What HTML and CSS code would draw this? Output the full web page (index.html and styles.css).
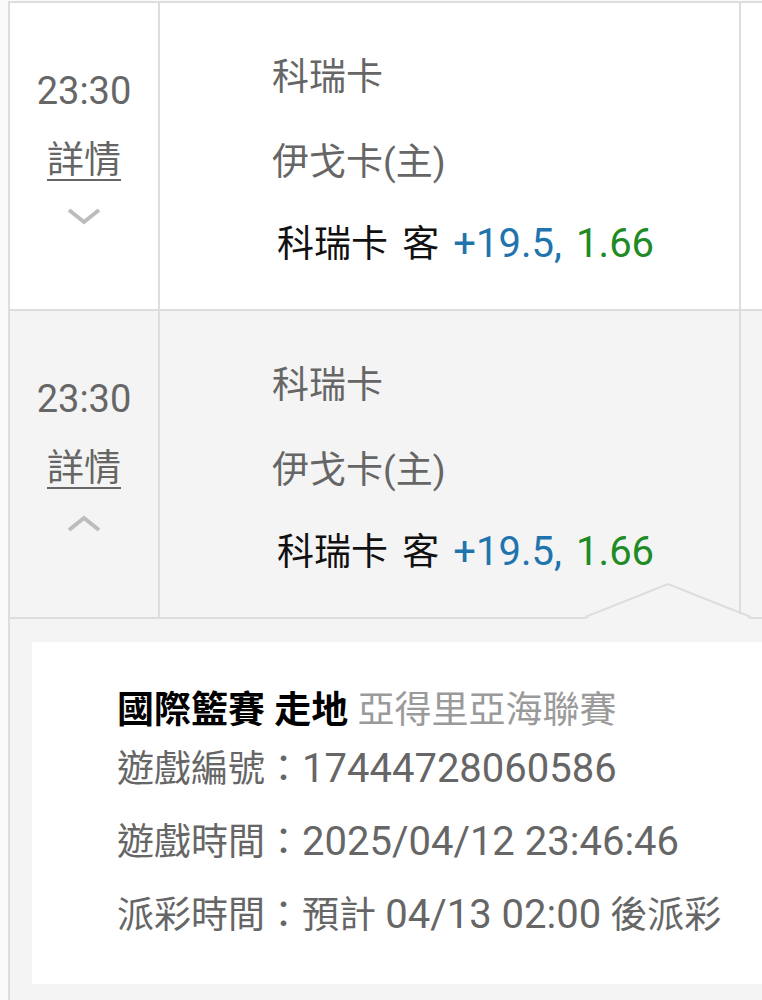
FILE: index.html
```html
<!DOCTYPE html>
<html lang="zh-Hant">
<head>
<meta charset="UTF-8" />
<meta name="viewport" content="width=device-width, initial-scale=1" />
<title>注單明細</title>
<link rel="stylesheet" href="styles.css">
</head>
<body>
  <div class="liste">

    <div class="ligne">
      <div class="cellule col-heure">
        <div class="heure">23:30</div>
        <a class="details" href="#">詳情</a>
        <svg class="chevron" width="36" height="18" viewBox="0 0 36 18"><polyline points="3,3 18,15 33,3" fill="none" stroke="#bdbdbd" stroke-width="4"/></svg>
      </div>
      <div class="cellule col-equipes">
        <div class="equipe">科瑞卡</div>
        <div class="equipe equipe-2">伊戈卡(主)</div>
        <div class="pari">科瑞卡 客 <span class="num handicap">+19.5,</span> <span class="num cote">1.66</span></div>
      </div>
      <div class="cellule col-fin"></div>
    </div>

    <div class="ligne ligne-ouverte">
      <div class="cellule col-heure">
        <div class="heure">23:30</div>
        <a class="details" href="#">詳情</a>
        <svg class="chevron" width="36" height="18" viewBox="0 0 36 18"><polyline points="3,15 18,3 33,15" fill="none" stroke="#bdbdbd" stroke-width="4"/></svg>
      </div>
      <div class="cellule col-equipes">
        <div class="equipe">科瑞卡</div>
        <div class="equipe equipe-2">伊戈卡(主)</div>
        <div class="pari">科瑞卡 客 <span class="num handicap">+19.5,</span> <span class="num cote">1.66</span></div>
      </div>
      <div class="cellule col-fin"></div>
    </div>

    <div class="panneau">
      <svg class="fleche" width="168" height="38" viewBox="0 0 168 38">
        <polygon points="0,37 83,1 166,37" fill="#f4f4f4"/>
        <polyline points="0,35 83,2 166,35" fill="none" stroke="#dddddd" stroke-width="2"/>
      </svg>
      <div class="carte">
        <div class="titre"><b>國際籃賽 走地</b> <span class="ligue">亞得里亞海聯賽</span></div>
        <div class="info">遊戲編號：<span class="num">17444728060586</span></div>
        <div class="info">遊戲時間：<span class="num">2025/04/12 23:46:46</span></div>
        <div class="info">派彩時間：預計 <span class="num">04/13 02:00</span> 後派彩</div>
      </div>
    </div>

  </div>
</body>
</html>
```

FILE: styles.css
```css
:root {
  --bordure: #dddddd;
  --gris-fond: #f4f4f4;
  --texte: #666666;
  --police: Roboto, "Noto Sans CJK TC", sans-serif;
}
body {
  margin: 0;
  background: #fafafa;
  font-family: var(--police);
  font-size: 37px;
  color: var(--texte);
  overflow: hidden;
}
.liste {
  margin: 1px 0 0 8px;
  border-left: 2px solid var(--bordure);
  border-top: 2px solid var(--bordure);
}
.ligne {
  display: grid;
  grid-template-columns: 150px 581px 1fr;
  height: 306px;
  background: white;
  border-bottom: 2px solid var(--bordure);
}
.ligne-ouverte {
  background: var(--gris-fond);
}
.cellule {
  border-right: 2px solid var(--bordure);
}
.col-fin {
  border-right: none;
}
.col-heure {
  display: flex;
  flex-direction: column;
  align-items: center;
}
.heure {
  margin-top: 63px;
  line-height: 50px;
  font-size: 38px;
}
.details {
  margin-top: 20px;
  line-height: 50px;
  color: var(--texte);
  text-decoration: underline;
  text-decoration-thickness: 2px;
  text-underline-offset: 6px;
}
.chevron {
  margin-top: 21px;
  display: block;
}
.col-equipes {
  padding-left: 112px;
}
.equipe {
  margin-top: 50px;
  line-height: 50px;
}
.equipe-2 {
  margin-top: 35px;
}
.pari {
  margin-top: 31px;
  padding-left: 5px;
  line-height: 50px;
  color: #111111;
  white-space: nowrap;
  word-spacing: 5px;
}
.num {
  font-size: 40px;
}
.pari .num {
  word-spacing: 0;
}
.handicap {
  color: #1f74ad;
}
.cote {
  color: #208a25;
}
.panneau {
  position: relative;
  background: var(--gris-fond);
  padding: 23px 0 30px 22px;
}
.fleche {
  position: absolute;
  top: -37px;
  left: 575px;
}
.carte {
  background: white;
  height: 295px;
  padding: 47px 0 0 85px;
}
.titre {
  line-height: 44px;
  color: #000;
}
.titre b {
  font-weight: 700;
}
.ligue {
  color: #9a9a9a;
}
.info {
  line-height: 72px;
  white-space: nowrap;
}
```
